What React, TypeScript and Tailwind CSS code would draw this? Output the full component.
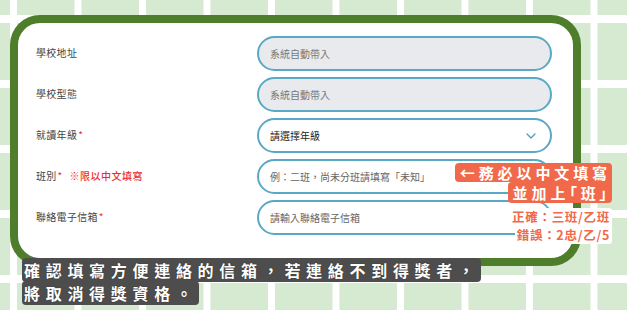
import React from 'react';

// Enrollment form fragment — school info rows with annotation overlays

const Req = () => <span className="text-[#e8302c] text-[10px] align-top ml-[1px]">*</span>;

const Chevron = () => (
    <svg width="10" height="6" viewBox="0 0 10 6" fill="none">
        <path d="M1 1l4 4 4-4" stroke="#4c9fbe" strokeWidth="1.3" strokeLinecap="round" strokeLinejoin="round" />
    </svg>
);

type Row = { label: string; required?: boolean; note?: string; kind: 'auto' | 'select' | 'text'; text: string };

const rows: Row[] = [
    { label: '學校地址', kind: 'auto', text: '系統自動帶入' },
    { label: '學校型態', kind: 'auto', text: '系統自動帶入' },
    { label: '就讀年級', required: true, kind: 'select', text: '請選擇年級' },
    { label: '班別', required: true, note: '※限以中文填寫', kind: 'text', text: '例：二班，尚未分班請填寫「未知」' },
    { label: '聯絡電子信箱', required: true, kind: 'text', text: '請輸入聯絡電子信箱' },
];

export default function App() {
    return (
        <div className="relative w-[627px] h-[310px] overflow-hidden bg-[#d6e9d1] bg-[image:linear-gradient(to_right,#ffffff_7px,transparent_7px),linear-gradient(to_bottom,#ffffff_8px,transparent_8px)] bg-[size:64.5px_65px] bg-[position:10px_15px] font-['Noto_Sans_CJK_TC','Noto_Sans',sans-serif]">
            <div className="pl-[10px] pt-[15px]">
                {/* FORM CARD */}
                <div className="w-[571px] h-[251px] border-[8px] border-[#4e7e2b] rounded-[30px] bg-white pl-[18px] pr-[21px] pt-[13px]">
                    <div className="grid grid-cols-[221px_295px] gap-y-[6px]">
                        {rows.map((r, i) => (
                            <React.Fragment key={i}>
                                <div className="flex items-center pb-[3px] text-[10px] text-[#444] tracking-[0.3px]">
                                    <span>{r.label}</span>
                                    {r.required && <Req />}
                                    {r.note && (
                                        <span className="ml-[7px] text-[#ee2d2a] font-medium tracking-[0.5px]">{r.note}</span>
                                    )}
                                </div>
                                <div
                                    className={
                                        r.kind === 'auto'
                                            ? 'h-[35px] rounded-full border-2 border-[#5aa9c4] bg-[#e8eaed] pl-[11px] pr-[14px] flex items-center justify-between text-[10px] text-[#777]'
                                            : r.kind === 'select'
                                            ? 'h-[35px] rounded-full border-2 border-[#5aa9c4] bg-white pl-[11px] pr-[14px] flex items-center justify-between text-[10px] text-[#222]'
                                            : 'h-[35px] rounded-full border-2 border-[#5aa9c4] bg-white pl-[11px] pr-[14px] flex items-center justify-between text-[10px] text-[#666]'
                                    }
                                >
                                    <span>{r.text}</span>
                                    {r.kind === 'select' && <Chevron />}
                                </div>
                            </React.Fragment>
                        ))}
                    </div>
                </div>

                {/* CAPTION */}
                <p className="relative -mt-[7px] ml-[12px] text-[16px] leading-[23px] font-bold text-white tracking-[5.7px] [text-shadow:0_0_1px_#222]">
                    <span className="bg-[#4d4d4d] rounded-[4px] pl-[2px] pr-[1px] box-decoration-clone">
                        確認填寫方便連絡的信箱，若連絡不到得獎者，
                        <br />
                        將取消得獎資格。
                    </span>
                </p>
            </div>

            {/* ANNOTATION */}
            <div className="absolute right-[15px] top-[163px] flex flex-col items-end">
                <span className="bg-[#f0694a] text-white font-bold text-[15px] leading-[19px] tracking-[3.9px] pl-[5px] pr-[1px] rounded-t-[4px] rounded-bl-[4px]">
                    ←務必以中文填寫
                </span>
                <span className="bg-[#f0694a] text-white font-bold text-[15px] leading-[21px] tracking-[3.9px] pl-[5px] pr-[1px] rounded-b-[4px] rounded-tl-[4px] [font-feature-settings:'palt']">
                    並加上「班」
                </span>
                <div className="mt-[5px] flex flex-col items-end text-[12.5px] leading-[18px] font-bold text-[#f0694a] tracking-[0.7px]">
                    <span className="bg-white px-[2px] rounded-t-[3px]">正確：三班/乙班</span>
                    <span className="bg-white px-[2px] rounded-b-[3px]">錯誤：2忠/乙/5</span>
                </div>
            </div>
        </div>
    );
}
